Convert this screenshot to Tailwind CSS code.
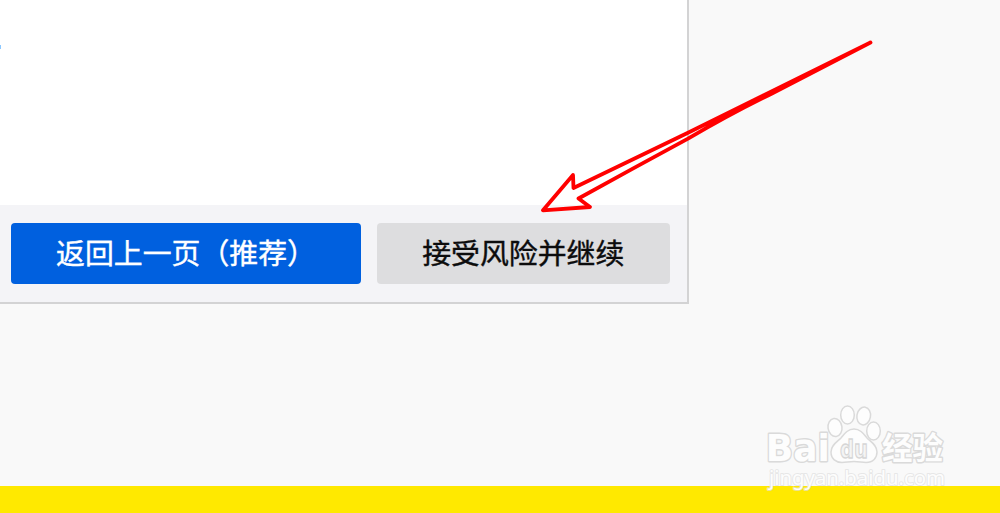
<!DOCTYPE html>
<html lang="zh-CN">

<head>
  <meta charset="UTF-8">
  <title>安全警告</title>
  <meta name="viewport" content="width=device-width, initial-scale=1.0">
  <script src="https://cdn.jsdelivr.net/npm/@tailwindcss/browser@4"></script>
</head>

<body class="relative h-screen overflow-hidden bg-[#f9f9f9] flex flex-col justify-between font-['Noto_Sans_CJK_SC',sans-serif]">
  <!-- Warning panel -->
  <main class="w-[689px] h-[304px] bg-white border-r-2 border-b-2 border-[#d3d3d4] flex flex-col">
    <div class="flex-1 pt-[45px]">
      <div class="w-px h-1 bg-[#8cc8ff]"></div>
    </div>
    <div class="h-[97px] bg-[#f4f4f7] flex items-start gap-4 pt-[17.5px] pl-[10.5px]">
      <button class="w-[350.5px] h-[61.5px] pl-[45.5px] pb-[4px] rounded-[4px] bg-[#0060df] text-white text-[28.9px] leading-[57px] text-left whitespace-nowrap [-webkit-text-stroke:0.4px_#fff]">返回上一页（推荐）</button>
      <button class="w-[292.5px] h-[61.5px] pb-[4px] rounded-[4px] bg-[#dddddf] text-[#0c0c0d] text-[28.9px] leading-[57px] text-center whitespace-nowrap [-webkit-text-stroke:0.4px_#0c0c0d]">接受风险并继续</button>
    </div>
  </main>

  <!-- Bottom strip -->
  <footer class="h-[27px] bg-[#ffe900]"></footer>

  <!-- Arrow -->
  <svg class="absolute inset-0" width="1000" height="513" viewBox="0 0 1000 513" fill="none">
    <path d="M870.5 42.5Q780 87 688 132.7L573.5 188L573 175L543 210.3L590 207L578.5 198.5Q632 169 688 138.7Q730 114 770 94.500L870.5 42.5Z" fill="none" stroke="#ff0000" stroke-width="3.8" stroke-linejoin="round" />
  </svg>

  <!-- Watermark -->
  <svg class="absolute left-[750px] top-[395px]" width="210" height="110" viewBox="0 0 210 110">
    <g fill="#fdfdfd" stroke="#dadada" stroke-width="1.5">
      <ellipse cx="85" cy="32.5" rx="7" ry="9" transform="rotate(-8 85 32.5)" />
      <ellipse cx="97.5" cy="20" rx="6.8" ry="9" />
      <ellipse cx="113.7" cy="21" rx="6.8" ry="9" transform="rotate(10 113.7 21)" />
      <ellipse cx="123.5" cy="36" rx="6.8" ry="9" />
      <path d="M104 34C98 34 95 38 91 43C87 47 81 50 81 57C81 64 86 67.5 92 67.5C96 67.5 99 66.5 104 66.5C109 66.5 112 67.5 116 67.5C123 67.5 127 63 127 57C127 50 121 47 117 43C113 38 110 34 104 34Z" />
    </g>
    <g fill="#fdfdfd" stroke="#dadada" stroke-width="2.8" paint-order="stroke" stroke-linejoin="round">
      <text x="15.8" y="65.5" font-family="DejaVu Sans, sans-serif" font-weight="700" font-size="38" textLength="64" lengthAdjust="spacingAndGlyphs">Bai</text>
      <text x="132" y="63.5" font-family="Noto Sans CJK SC, sans-serif" font-weight="700" font-size="31" textLength="61" lengthAdjust="spacingAndGlyphs">经验</text>
    </g>
    <text x="90" y="62.5" font-family="DejaVu Sans, sans-serif" font-weight="700" font-size="25" textLength="28" lengthAdjust="spacingAndGlyphs" fill="#f4f4f4" stroke="#d6d6d6" stroke-width="1.3">du</text>
    <text x="19" y="89.5" font-family="Noto Sans, sans-serif" font-size="20.5" textLength="176" lengthAdjust="spacingAndGlyphs" fill="#fdfdfd" stroke="#dfdfdf" stroke-opacity="0.7" stroke-width="2" paint-order="stroke" stroke-linejoin="round">jingyan.baidu.com</text>
  </svg>
</body>

</html>
